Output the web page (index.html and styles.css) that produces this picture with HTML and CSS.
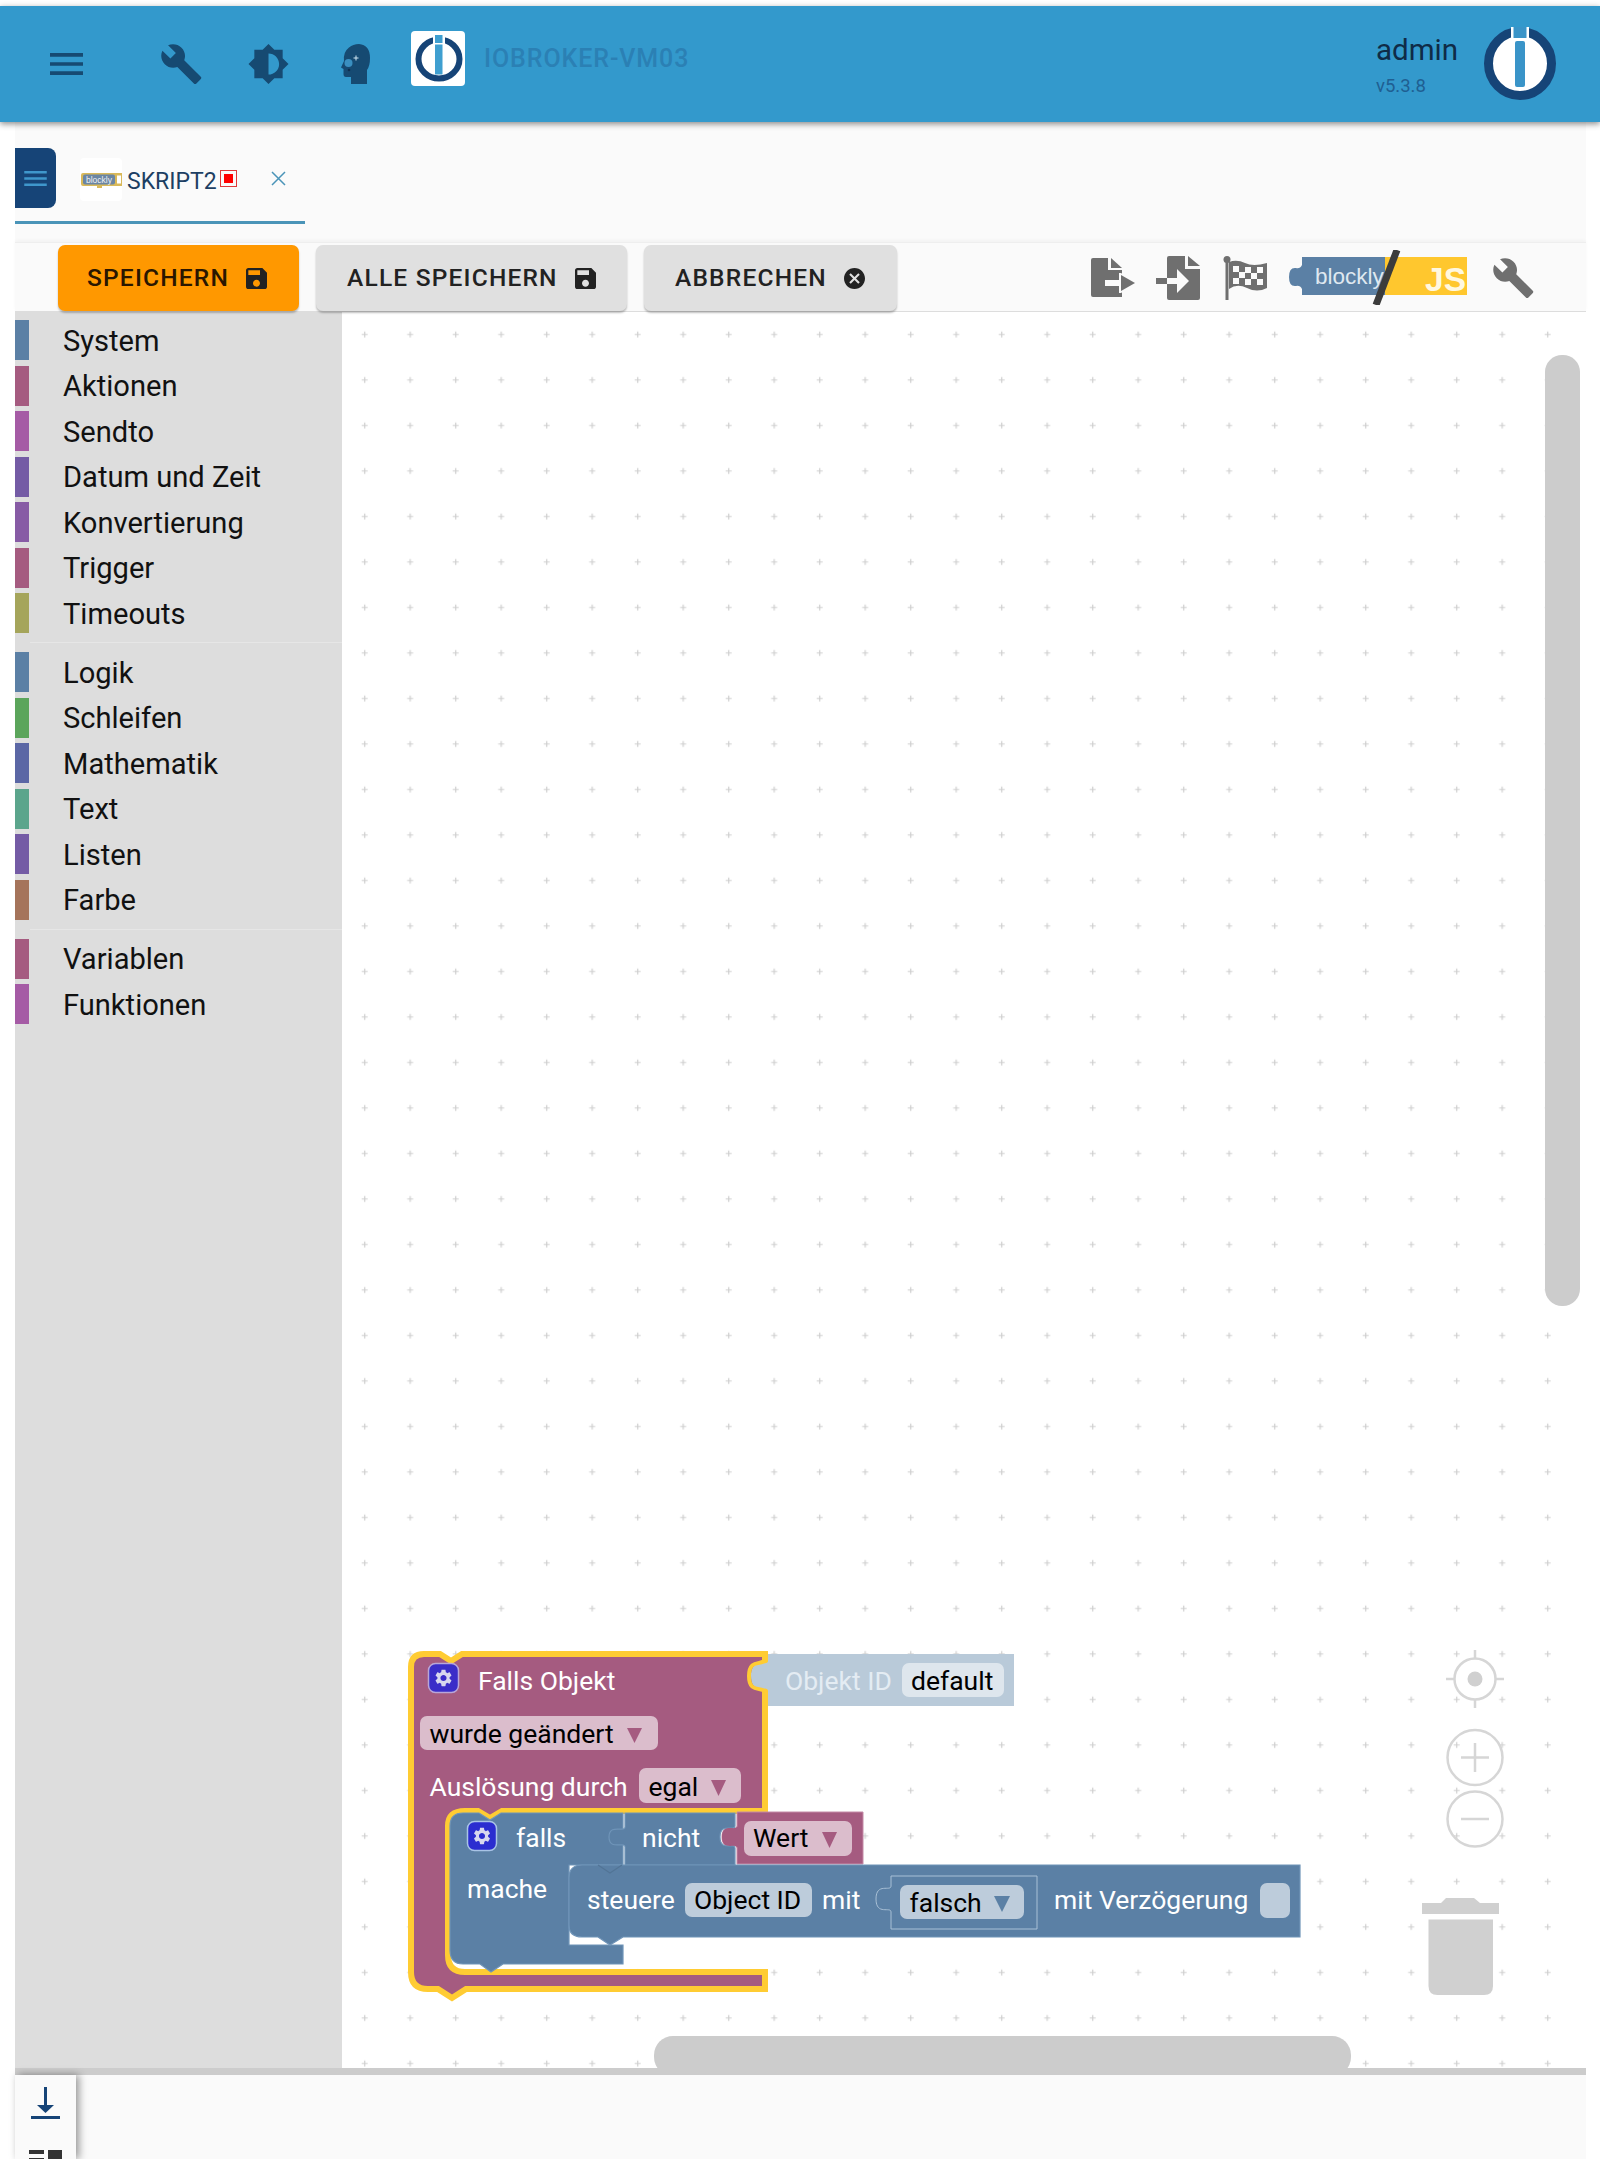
FILE: index.html
```html
<!DOCTYPE html>
<html lang="de">
<head>
<meta charset="utf-8">
<title>ioBroker Blockly</title>
<link rel="stylesheet" href="styles.css">
</head>
<body>
<header class="appbar">
  <svg class="ico ico-menu" viewBox="3 6 18 12"><path d="M3 18h18v-2H3v2zm0-5h18v-2H3v2zm0-7v2h18V6H3z"/></svg>
  <svg class="ico ico-wrench" viewBox="1 1 22.2 22"><path d="M22.7 19l-9.1-9.1c.9-2.3.4-5-1.5-6.9-2-2-5-2.4-7.4-1.3L9 6 6 9 1.6 4.7C.4 7.1.9 10.1 2.9 12.1c1.9 1.9 4.6 2.4 6.9 1.5l9.1 9.1c.4.4 1 .4 1.4 0l2.3-2.3c.5-.4.5-1.1.1-1.4z"/></svg>
  <svg class="ico ico-bright" viewBox="0.7 0.7 22.6 22.6"><path d="M20 15.31L23.31 12 20 8.69V4h-4.69L12 .69 8.69 4H4v4.69L.69 12 4 15.31V20h4.69L12 23.31 15.31 20H20v-4.69zM12 18V6c3.31 0 6 2.69 6 6s-2.69 6-6 6z"/></svg>
  <svg class="ico ico-head" viewBox="0 0 29 40"><path d="M10 40V33H5Q2.500 33 2.500 30V25L0 23.500 3 17Q2 8 8 3.500 12 0 18 0 29 1 29 14 29 22 26 26V40Z"/><circle cx="7.500" cy="19" r="4" fill="#3a8fc0"/><path d="M12.500 14h5M15 11.500v5" stroke="#cfe5f2" stroke-width="1" fill="none"/><circle cx="8" cy="26" r="1.300" fill="#0e2f4f"/></svg>
  <div class="logo-box">
    <svg class="logo-small" viewBox="0 0 54 55">
      <ellipse cx="28" cy="28" rx="20.500" ry="19.500" fill="none" stroke="#164477" stroke-width="6"/>
      <rect x="22" y="2" width="12" height="12" fill="#fff"/>
      <rect x="24" y="4" width="7.500" height="8" fill="#3f9fd0"/>
      <rect x="24" y="13.500" width="7.500" height="30" fill="#3f9fd0"/>
    </svg>
  </div>
  <span class="host">IOBROKER-VM03</span>
  <div class="user">
    <span class="user-name">admin</span>
    <span class="user-ver">v5.3.8</span>
  </div>
  <svg class="logo-big" viewBox="0 0 72 73">
    <ellipse cx="36" cy="36.500" rx="31.500" ry="32" fill="#fff" stroke="#164477" stroke-width="9"/>
    <rect x="27" y="0" width="18" height="13" fill="#fff"/>
    <rect x="29.500" y="0" width="13" height="11" fill="#3a94c8"/>
    <rect x="31" y="14" width="10" height="46" rx="2" fill="#3a94c8"/>
  </svg>
</header>

<main class="panel">
  <div class="tabs">
    <div class="tab-menu"><svg class="ico-tabmenu" viewBox="3 6 18 12"><path d="M3 18h18v-2H3v2zm0-5h18v-2H3v2zm0-7v2h18V6H3z"/></svg></div>
    <div class="tab">
      <div class="tab-logo">
        <svg class="tab-logo-svg" viewBox="0 0 42 18">
          <path d="M3 2H42V15H22V17H17V15H3Q1 15 1 13V4Q1 2 3 2Z" fill="#d9b95a"/>
          <rect x="3" y="3.500" width="32" height="10" rx="2" fill="#6b86a3"/>
          <rect x="37" y="4.500" width="4" height="8" fill="#fff"/>
          <text x="6" y="11.500" class="tab-logo-text">blockly</text>
        </svg>
      </div>
      <span class="tab-label">SKRIPT2</span>
      <span class="tab-dirty"><span class="tab-dirty-dot"></span></span>
      <svg class="tab-close" viewBox="0 0 15 15"><path d="M1 1l13 13M14 1L1 14"/></svg>
    </div>
  </div>

  <div class="toolbar">
    <button class="btn btn-primary">SPEICHERN<svg class="btn-ico" viewBox="3 3 18 18"><path d="M17 3H5c-1.110 0-2 .9-2 2v14c0 1.100.89 2 2 2h14c1.100 0 2-.9 2-2V7l-4-4zm-5 16c-1.660 0-3-1.340-3-3s1.340-3 3-3 3 1.340 3 3-1.340 3-3 3zm3-10H5V5h10v4z"/></svg></button>
    <button class="btn btn-all">ALLE SPEICHERN<svg class="btn-ico" viewBox="3 3 18 18"><path d="M17 3H5c-1.110 0-2 .9-2 2v14c0 1.100.89 2 2 2h14c1.100 0 2-.9 2-2V7l-4-4zm-5 16c-1.660 0-3-1.340-3-3s1.340-3 3-3 3 1.340 3 3-1.340 3-3 3zm3-10H5V5h10v4z"/></svg></button>
    <button class="btn btn-cancel">ABBRECHEN<svg class="btn-ico" viewBox="2 2 20 20"><path d="M12 2C6.470 2 2 6.470 2 12s4.470 10 10 10 10-4.470 10-10S17.530 2 12 2zm5 13.590L15.590 17 12 13.410 8.410 17 7 15.590 10.590 12 7 8.410 8.410 7 12 10.590 15.590 7 17 8.410 13.410 12 17 15.590z"/></svg></button>
    <div class="tools">
      <svg class="tool tool-export" viewBox="0 0 44 39">
        <path d="M2 0H17V12H31V39H2Q0 39 0 37V2Q0 0 2 0Z"/><path d="M20 0L31 10H20Z"/>
        <path d="M14 22H30V28H14Z" fill="#fafafa"/><path d="M28 15h2L44 25 30 35h-2Z" fill="#fafafa"/><path d="M30 17L44 25 30 33Z"/>
      </svg>
      <svg class="tool tool-import" viewBox="0 0 44 44">
        <path d="M13 0H29V13H44V42Q44 44 42 44H13Q11 44 11 42V28H0V22H11V2Q11 0 13 0Z"/><path d="M32 0L44 10H32Z"/>
        <path d="M11 22H22V28H11Z" fill="#fafafa"/><path d="M21 13L33 25 21 37Z" fill="#fafafa"/>
      </svg>
      <svg class="tool tool-flag" viewBox="0 0 44 44">
        <circle cx="4" cy="3.500" r="3.500"/><path d="M2.500 4H5.500V44H2.500Z"/>
        <path d="M6 6Q14 3 22 7T44 7V32Q34 37 24 32T6 33Z"/>
        <path d="M10 10h6v6h-6zM22 11h6v6h-6zM34 11h6v6h-6zM16 16h6v6h-6zM28 17h6v6h-6zM10 22h6v6h-6zM22 23h6v6h-6zM34 23h6v6h-6z" fill="#fafafa"/>
      </svg>
      <svg class="tool-mode" viewBox="0 0 178 55">
        <path d="M13 7H96V45H13V39Q11 35 7 36 0 37 0 27 0 17 7 18 11 19 13 15Z" fill="#5b80a5"/>
        <rect x="96" y="7" width="82" height="38" fill="#ffc72e"/>
        <text x="26" y="34" class="mode-blockly">blockly</text>
        <text x="136" y="41" textLength="41" lengthAdjust="spacingAndGlyphs" class="mode-js">JS</text>
        <path d="M108 0L87 55" stroke="#3c3c3c" stroke-width="7" fill="none"/>
      </svg>
      <svg class="tool tool-wrench" viewBox="1 1 22.2 22"><path d="M22.7 19l-9.1-9.1c.9-2.300.4-5-1.500-6.900-2-2-5-2.400-7.400-1.300L9 6 6 9 1.600 4.700C.4 7.100.9 10.100 2.900 12.100c1.900 1.900 4.600 2.400 6.900 1.500l9.100 9.100c.4.4 1 .4 1.400 0l2.300-2.300c.5-.4.5-1.100.1-1.400z"/></svg>
    </div>
  </div>

  <div class="workspace">
    <aside class="sidebar">
      <div class="cat"><i class="swatch c-blue"></i>System</div>
      <div class="cat"><i class="swatch c-rose"></i>Aktionen</div>
      <div class="cat"><i class="swatch c-magenta"></i>Sendto</div>
      <div class="cat"><i class="swatch c-violet"></i>Datum und Zeit</div>
      <div class="cat"><i class="swatch c-purple"></i>Konvertierung</div>
      <div class="cat"><i class="swatch c-rose"></i>Trigger</div>
      <div class="cat"><i class="swatch c-olive"></i>Timeouts</div>
      <div class="sep"></div>
      <div class="cat"><i class="swatch c-blue"></i>Logik</div>
      <div class="cat"><i class="swatch c-green"></i>Schleifen</div>
      <div class="cat"><i class="swatch c-indigo"></i>Mathematik</div>
      <div class="cat"><i class="swatch c-teal"></i>Text</div>
      <div class="cat"><i class="swatch c-violet"></i>Listen</div>
      <div class="cat"><i class="swatch c-brown"></i>Farbe</div>
      <div class="sep"></div>
      <div class="cat"><i class="swatch c-rose"></i>Variablen</div>
      <div class="cat"><i class="swatch c-magenta"></i>Funktionen</div>
    </aside>

    <section class="canvas">
      <svg class="board" viewBox="342 312 1244 1756" width="1244" height="1756">
        <defs>
          <pattern id="dots" patternUnits="userSpaceOnUse" x="342.2" y="312" width="45.5" height="45.5">
            <path d="M22.500 19.500v6M19.500 22.500h6" stroke="#cfcfcf" stroke-width="1.200"/>
          </pattern>
          <path id="gear" transform="scale(.85) translate(-12 -12)" fill="#d8d8ee" d="M19.140 12.940c.04-.3.06-.61.06-.94 0-.32-.02-.64-.07-.94l2.030-1.580c.18-.14.23-.41.12-.61l-1.920-3.320c-.12-.22-.37-.29-.59-.22l-2.390.96c-.5-.38-1.030-.7-1.620-.94l-.36-2.540c-.04-.24-.24-.41-.48-.41h-3.840c-.24 0-.43.17-.47.41l-.36 2.540c-.59.24-1.130.57-1.620.94l-2.390-.96c-.22-.08-.47 0-.59.22L2.740 8.870c-.12.21-.08.47.12.61l2.030 1.580c-.05.3-.09.63-.09.94s.02.64.07.94l-2.030 1.580c-.18.14-.23.41-.12.61l1.920 3.320c.12.22.37.29.59.22l2.390-.96c.5.38 1.030.7 1.620.94l.36 2.540c.05.24.24.41.48.41h3.840c.24 0 .44-.17.47-.41l.36-2.540c.59-.24 1.130-.56 1.620-.94l2.390.96c.22.08.47 0 .59-.22l1.920-3.320c.12-.22.07-.47-.12-.61l-2.010-1.580zM12 15.600c-1.980 0-3.600-1.620-3.600-3.600s1.620-3.600 3.600-3.600 3.600 1.620 3.600 3.600-1.620 3.600-3.600 3.600z"/>
        </defs>
        <rect x="342" y="312" width="1244" height="1756" fill="url(#dots)"/>

        <rect x="1545" y="355" width="35" height="951" rx="17" fill="#ccc"/>
        <rect x="654" y="2036" width="697" height="40" rx="19" fill="#ccc"/>

        <g class="ctrl">
          <circle cx="1475" cy="1679" r="20.500"/>
          <path d="M1475 1650v9M1475 1699v9M1446 1679h9M1495 1679h9"/>
          <circle cx="1475" cy="1679" r="7.500" class="ctrl-fill"/>
          <circle cx="1475" cy="1757.500" r="27.500"/>
          <path d="M1475 1743v29M1461 1757.500h28"/>
          <circle cx="1475" cy="1819" r="27.500"/>
          <path d="M1461 1819h28"/>
        </g>
        <g class="ctrl-fill">
          <path d="M1422 1914V1903H1441L1446 1898H1474L1480 1903H1499V1914Z"/>
          <path d="M1428.500 1919.500H1493V1986Q1493 1995 1484 1995H1437.500Q1428.500 1995 1428.500 1986Z"/>
        </g>

        <!-- outer event block -->
        <path class="blk-hat" d="M411 1667Q411 1654 424 1654H440L451 1661 462 1654H765V1811H502L490 1818 478 1811H465Q448 1811 448 1826V1955Q448 1972 465 1972H765V1989H466L452 1998 438 1989H428Q411 1989 411 1972Z"/>
        <!-- Objekt ID shadow block -->
        <path class="blk-shadow" d="M768 1654H1014V1706H768V1691C768 1685 751 1695 751 1676 751 1657 768 1667 768 1661Z"/>
        <path class="tab-hl" d="M765 1660C762 1666 749 1658 749 1676 749 1694 762 1686 765 1692"/>

        <!-- Wert block -->
        <path class="blk-rose" d="M737 1812H863V1864H737V1848C737 1842 722 1852 722 1837 722 1822 737 1832 737 1826Z"/>
        <!-- if block -->
        <path class="blk-blue" d="M450 1826Q450 1813 463 1813H479L490 1820 501 1813H623V1865H569V1945H623V1964H503L491 1972 480 1964H463Q450 1964 450 1950Z"/>
        <!-- nicht block -->
        <path class="blk-blue" d="M625 1813H735V1826C735 1832 720 1822 720 1837 720 1852 735 1842 735 1848V1865H625V1847C625 1841 609 1851 609 1837 609 1823 625 1833 625 1827Z"/>
        <path class="blk-rose-tab" d="M737 1826C737 1832 722 1822 722 1837 722 1852 737 1842 737 1848Z"/>
        <!-- steuere block -->
        <path class="blk-blue" d="M569 1878Q569 1865 582 1865H1300V1937H623L610 1945 598 1937H582Q569 1937 569 1925Z"/>
        <path class="notch-line" d="M598 1865L610 1873 622 1865"/>
        <!-- falsch block -->
        <path class="blk-nested" d="M891 1876H1037V1929H891V1912C891 1906 876 1916 876 1899 876 1882 891 1892 891 1886Z"/>

        <rect class="fld-rose" x="420" y="1716" width="238" height="34" rx="7"/>
        <rect class="fld-rose" x="639" y="1768" width="102" height="35" rx="7"/>
        <rect class="fld-rose" x="744" y="1821" width="108" height="35" rx="7"/>
        <rect class="fld-pale" x="902" y="1663" width="102" height="34" rx="7"/>
        <rect class="fld-blue" x="685" y="1883" width="127" height="34" rx="7"/>
        <rect class="fld-blue" x="900" y="1885" width="124" height="34" rx="7"/>
        <rect class="fld-blue" x="1260" y="1883" width="30" height="35" rx="7"/>

        <path class="tri-rose" d="M627 1728H642L634.500 1743Z"/>
        <path class="tri-rose" d="M711 1780H726L718.500 1796Z"/>
        <path class="tri-rose" d="M822 1832H837L829.500 1848Z"/>
        <path class="tri-blue" d="M994 1896H1010L1002 1912Z"/>

        <rect x="428.500" y="1663.500" width="30" height="29" rx="7" fill="#3a2dc8" stroke="#b9a6d8" stroke-width="1.500"/>
        <use href="#gear" x="443.500" y="1678"/>
        <rect x="467.500" y="1821.500" width="29" height="29" rx="7" fill="#2b2dd0" stroke="#a9c4e6" stroke-width="1.500"/>
        <use href="#gear" x="482" y="1836"/>

        <text class="t-w" x="478" y="1690">Falls Objekt</text>
        <text class="t-p" x="785" y="1690">Objekt ID</text>
        <text class="t-k" x="911" y="1690">default</text>
        <text class="t-k" x="429.500" y="1742.500">wurde geändert</text>
        <text class="t-w" x="429.500" y="1796">Auslösung durch</text>
        <text class="t-k" x="648.500" y="1796">egal</text>
        <text class="t-w" x="516" y="1847">falls</text>
        <text class="t-w" x="642" y="1847">nicht</text>
        <text class="t-k" x="753" y="1847">Wert</text>
        <text class="t-w" x="467" y="1898">mache</text>
        <text class="t-w" x="587" y="1909">steuere</text>
        <text class="t-k" x="694" y="1909">Object ID</text>
        <text class="t-w" x="822" y="1909">mit</text>
        <text class="t-k" x="909.500" y="1912">falsch</text>
        <text class="t-w" x="1054" y="1909">mit Verzögerung</text>
      </svg>
    </section>
  </div>

  <div class="bottom">
    <div class="log-side">
      <svg class="log-down" viewBox="0 0 29 32"><path d="M13 0h3v19h-3zM6 18h17l-8.500 8zM0 29h29v3H0z"/></svg>
      <svg class="log-view" viewBox="0 0 33 16"><path d="M0 0h15v4H0zM0 8h15v4H0zM19 0h14v16H19z"/></svg>
    </div>
  </div>
</main>
</body>
</html>
```
FILE: styles.css
```css
* { box-sizing: border-box; }
html, body { margin: 0; height: 2159px; overflow: hidden; background: #fff; }
body { font-family: Roboto, "Liberation Sans", sans-serif; padding-top: 6px; }

.appbar {
  position: relative; z-index: 2;
  display: flex; align-items: flex-start;
  height: 116px;
  background: #3399cc;
  box-shadow: 0 2px 6px rgba(0,0,0,.45);
}
.ico { display: block; fill: #164a72; }
.ico-menu { width: 33px; height: 22px; margin: 47px 0 0 50px; }
.ico-wrench { width: 41px; height: 40px; margin: 38px 0 0 78px; }
.ico-bright { width: 41px; height: 40px; margin: 38px 0 0 46px; }
.ico-head { width: 29px; height: 40px; margin: 38px 0 0 52px; }
.logo-box { width: 54px; height: 55px; margin: 25px 0 0 41px; background: #fff; border-radius: 4px; }
.logo-small { display: block; width: 54px; height: 55px; }
.host { margin: 38px 0 0 19px; font-size: 25px; line-height: 30px; font-weight: 500; letter-spacing: .9px; color: #2b80b4; }
.user { margin: 0 26px 0 auto; padding-top: 27px; display: flex; flex-direction: column; }
.user-name { font-size: 29.500px; line-height: 34px; color: #0f2b47; }
.user-ver { margin-top: 9px; font-size: 18.500px; line-height: 20px; color: #1f5f92; }
.logo-big { display: block; width: 72px; height: 73px; margin: 21px 44px 0 0; }

.panel {
  margin: 0 14px 0 15px;
  height: 2037px;
  display: flex; flex-direction: column;
  background: #fafafa;
}
.tabs { position: relative; flex: none; height: 120px; display: flex; align-items: flex-start; }
.tab-menu {
  width: 41px; height: 60px; margin-top: 26px;
  display: flex; align-items: center; justify-content: center;
  background: #164477; border-radius: 0 8px 8px 0;
}
.ico-tabmenu { width: 23px; height: 15px; fill: #3f97cc; }
.tab {
  position: absolute; left: 0; top: 0;
  width: 290px; height: 102px;
  border-bottom: 3px solid #4a94b8;
  display: flex; align-items: flex-start;
}
.tab-logo { width: 42px; height: 43px; margin: 36px 0 0 65px; background: #fff; border-radius: 4px; display: flex; align-items: center; }
.tab-logo-svg { display: block; width: 42px; height: 18px; }
.tab-logo-text { font-family: "Liberation Sans", sans-serif; font-size: 8.500px; fill: #f2f2f2; }
.tab-label { margin: 46px 0 0 5px; font-size: 23px; line-height: 28px; color: #1d3f63; }
.tab-dirty { margin: 48px 0 0 3px; width: 17px; height: 17px; border: 1px solid #e03a3a; display: flex; align-items: center; justify-content: center; }
.tab-dirty-dot { width: 9px; height: 9px; background: #f00; }
.tab-close { width: 15px; height: 15px; margin: 49px 0 0 34px; fill: none; stroke: #4a94b8; stroke-width: 1.500; }

.toolbar {
  position: relative; flex: none;
  height: 70px;
  display: flex; align-items: flex-start;
  padding: 2px 0 0 43px;
  border-top: 1px solid #eee;
  border-bottom: 1px solid #ddd;
  box-shadow: 0 -2px 3px rgba(0,0,0,.03);
}
.btn {
  display: flex; align-items: center;
  height: 66px;
  border: 0; border-radius: 7px;
  font: 500 24.500px/30px Roboto, sans-serif;
  letter-spacing: 1.200px;
  color: #222;
  background: #e0e0e0;
  box-shadow: 0 2px 2px rgba(0,0,0,.25);
  padding: 0 0 0 29px;
}
.btn-primary { width: 241px; background: #ff9800; color: #2a1600; }
.btn-all { width: 311px; margin-left: 17px; padding-left: 31px; }
.btn-cancel { width: 253px; margin-left: 17px; padding-left: 31px; }
.btn-ico { width: 21px; height: 21px; margin-left: 17px; fill: #222; flex: none; }

.tools { margin-left: auto; padding-right: 52px; display: flex; align-items: flex-start; }
.tool { display: block; fill: #6f6f6f; flex: none; }
.tool-export { width: 44px; height: 39px; margin-top: 13px; }
.tool-import { width: 44px; height: 44px; margin: 11px 0 0 21px; }
.tool-flag { width: 44px; height: 44px; margin: 11px 0 0 23px; }
.tool-mode { display: block; width: 178px; height: 55px; margin: 5px 0 0 22px; flex: none; }
.mode-blockly { font-family: "Liberation Sans", sans-serif; font-size: 22.500px; fill: #dfe8f0; }
.mode-js { font-family: "Liberation Sans", sans-serif; font-size: 34px; font-weight: 700; fill: #fff8e0; }
.tool-wrench { width: 41px; height: 40px; margin: 13px 0 0 26px; }

.workspace { flex: none; height: 1756px; display: flex; background: #fff; }
.sidebar { flex: none; width: 327px; padding-top: 8px; background: #ddd; display: flex; flex-direction: column; align-items: stretch; }
.cat {
  flex: none;
  display: flex; align-items: center;
  height: 40px; margin-bottom: 5.500px;
  padding-top: 1px;
  font-size: 29.100px; color: #111;
}
.swatch { flex: none; align-self: flex-start; width: 14px; height: 40px; margin: -1px 34px 0 0; }
.sep { flex: none; height: 1px; margin: 3.500px 0 9px 15px; background: #e6e6e6; }
.c-blue { background: #5b80a5; }
.c-rose { background: #a55b80; }
.c-magenta { background: #a55ba5; }
.c-violet { background: #745ba5; }
.c-purple { background: #875ba5; }
.c-olive { background: #a5a55b; }
.c-green { background: #5ba55b; }
.c-indigo { background: #5b67a5; }
.c-teal { background: #5ba58c; }
.c-brown { background: #a5745b; }

.canvas { flex: none; width: 1244px; height: 1756px; overflow: hidden; }
.board { display: block; font-family: Roboto, sans-serif; font-size: 26.500px; }
.ctrl { fill: none; stroke: #d6d6d6; stroke-width: 2.500; }
.ctrl-fill { fill: #d0d0d0; stroke: none; }
.blk-hat { fill: #a55b80; stroke: #ffcc33; stroke-width: 6; }
.blk-shadow { fill: #b9cad9; }
.tab-hl { fill: none; stroke: #ffcc33; stroke-width: 4; }
.blk-rose { fill: #a55b80; stroke: #c48aa6; stroke-width: 1; }
.blk-rose-tab { fill: #a55b80; }
.blk-blue { fill: #5b80a5; stroke: #6f94b8; stroke-width: 1.200; }
.notch-line { fill: none; stroke: #527496; stroke-width: 1.200; }
.blk-nested { fill: #5b80a5; stroke: #a9c0d6; stroke-width: 1; }
.fld-rose { fill: #dbbdcc; }
.fld-pale { fill: #dee6ed; }
.fld-blue { fill: #bdccdb; }
.tri-rose { fill: #a55b80; }
.tri-blue { fill: #5b80a5; }
.t-w { fill: #fff; }
.t-p { fill: #e4ecf3; }
.t-k { fill: #000; }

.bottom { position: relative; flex: none; height: 84px; border-top: 7px solid #ccc; }
.log-side {
  width: 61px; height: 84px;
  display: flex; flex-direction: column; align-items: center;
  padding-top: 12px;
  background: #fafafa;
  box-shadow: 3px 0 8px rgba(0,0,0,.4);
}
.log-down { display: block; width: 29px; height: 32px; fill: #164477; flex: none; }
.log-view { display: block; width: 33px; height: 16px; margin-top: 31px; fill: #333; flex: none; }
```
